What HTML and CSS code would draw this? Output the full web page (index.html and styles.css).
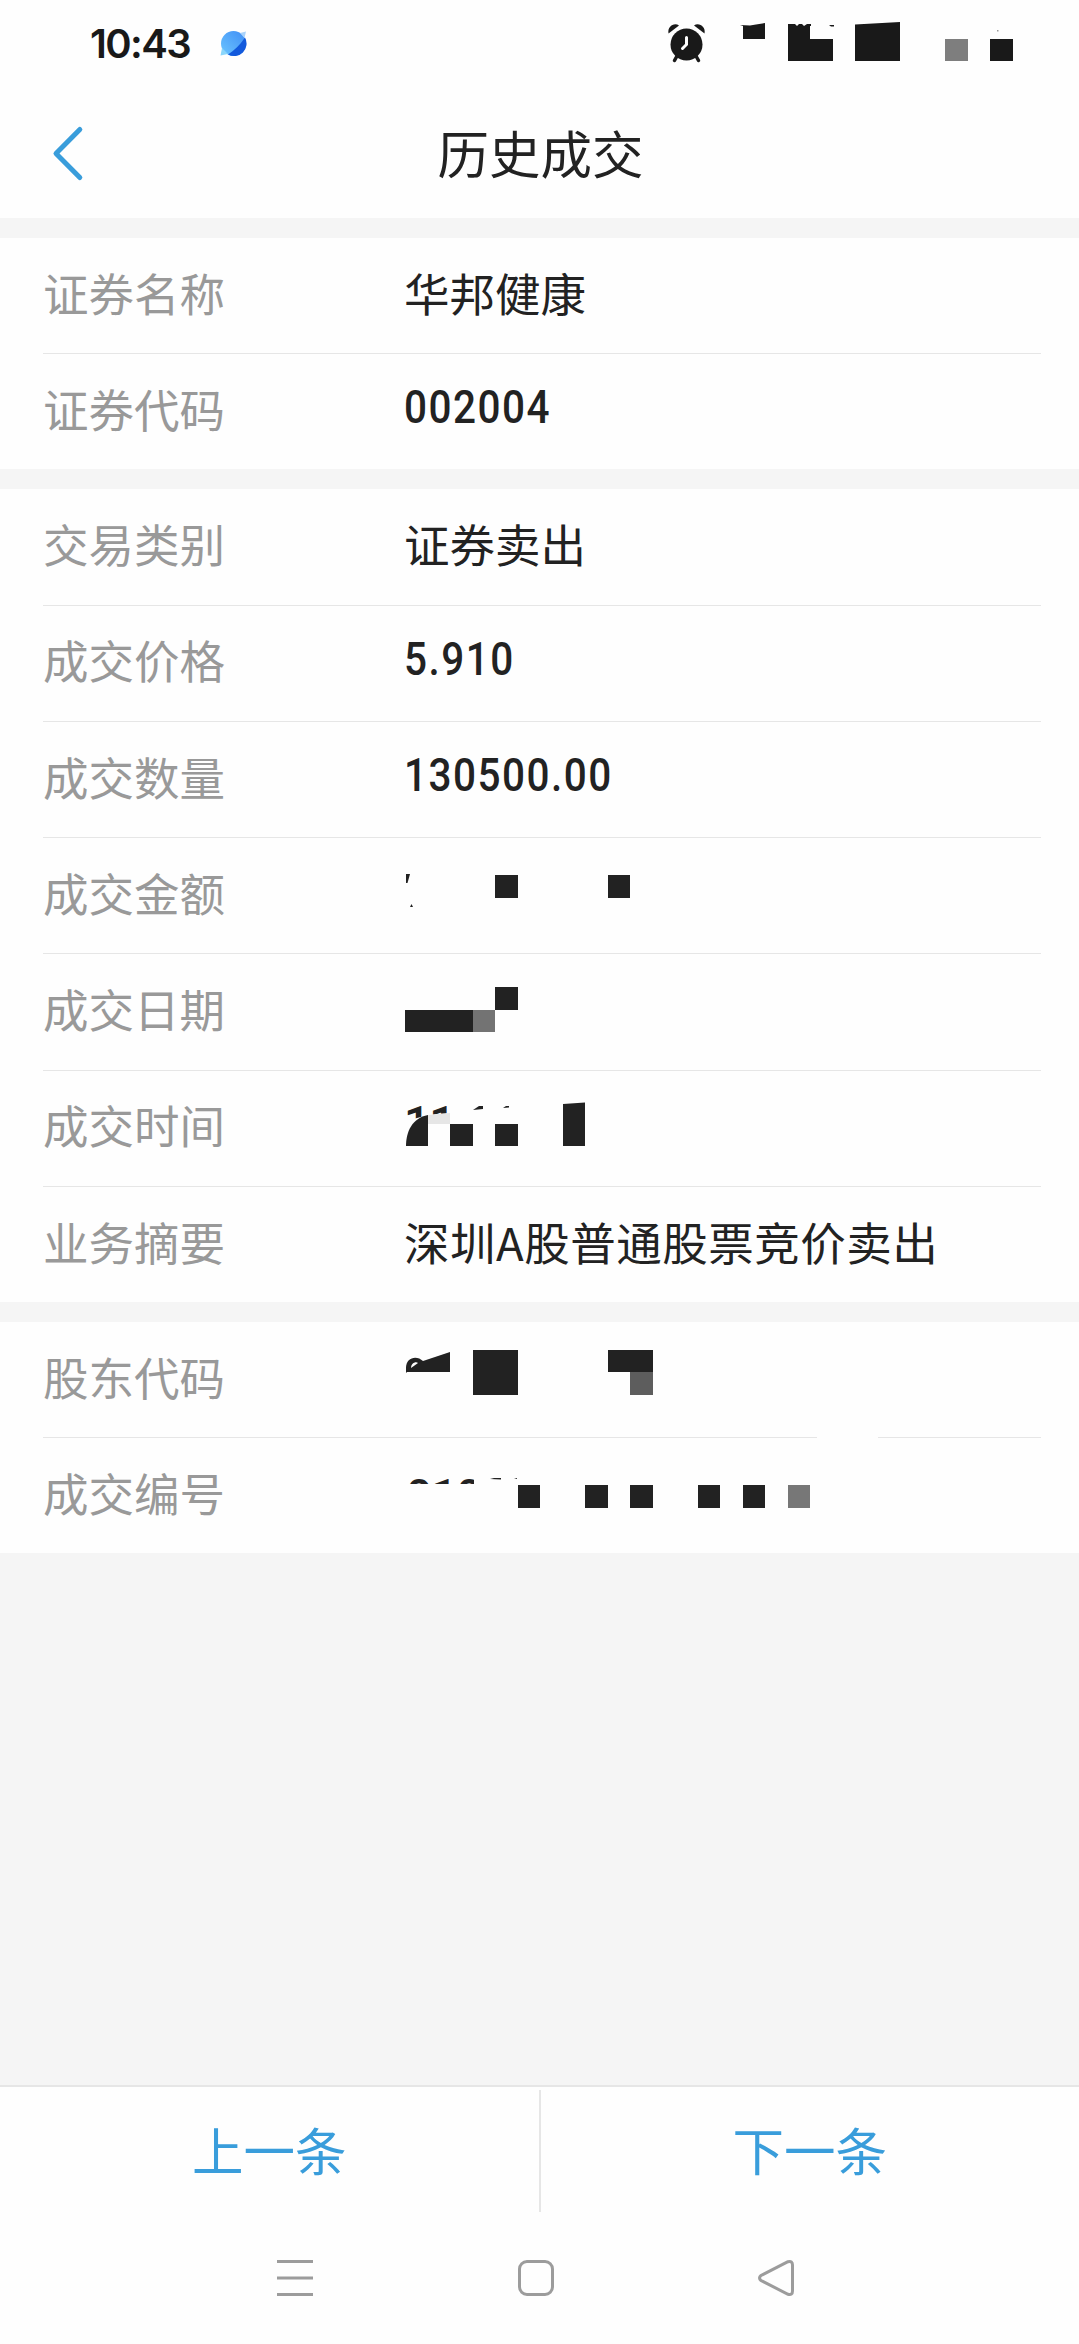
FILE: index.html
```
<!DOCTYPE html>
<html lang="zh-CN">
<head>
    <meta charset="UTF-8">
    <meta name="viewport" content="width=device-width, initial-scale=1.0">
    <title>历史成交</title>
    <link rel="stylesheet" href="styles.css">
</head>
<body>

    <div class="status-bar">
        <span class="time">10:43</span>
        <svg class="app-dot" width="32" height="32" viewBox="217 27 32 32">
            <defs>
                <linearGradient id="dotLight" x1="1" y1="0" x2="0" y2="1">
                    <stop offset="0" stop-color="#3f8df5"/>
                    <stop offset="1" stop-color="#6cc6ff"/>
                </linearGradient>
            </defs>
            <circle cx="233.5" cy="43.5" r="12.5" fill="url(#dotLight)"/>
            <path d="M245 37.500A12.500 12.500 0 0 1 228 54.500Q238 48 245 37.500Z" fill="#1259dc"/>
            <path d="M222 48L220.500 55.500L228 54Z" fill="#8ad6fb"/>
            <path d="M240 33L246 31.500L244.500 38Z" fill="#a9d3fb"/>
        </svg>
        <svg class="status-icons" width="360" height="50" viewBox="660 18 360 50">
            <g fill="#191919">
                <circle cx="686.500" cy="44.500" r="16"/>
                <path d="M668.500 33.500C667 27 674 22 679 25.500Z"/>
                <path d="M704.500 33.500C706 27 699 22 694 25.500Z"/>
                <path d="M677 56L674.500 60.500M696 56L698.500 60.500" stroke="#191919" stroke-width="3.500" stroke-linecap="round"/>
                <path d="M686.500 37.500V44.500L682.500 48.500" fill="none" stroke="#fff" stroke-width="3" stroke-linecap="round"/>
                <path d="M740 25L750 25.500L756 24.500L765 23V39H743V26Z"/>
                <path d="M788 24H795L797 26L799 24H802L804 26L807 24H811V26H810V39H833V61H788Z"/>
                <path d="M829 25H834V26.500H831Z"/>
                <path d="M855 24.500L900 22V61H855Z"/>
                <rect x="990" y="39" width="23" height="22"/>
            </g>
            <rect x="945" y="39" width="23" height="22" fill="#7e7e7e"/>
            <rect x="997" y="30" width="1.500" height="1.500" fill="#999"/>
        </svg>
    </div>

    <div class="header">
        <svg class="back" width="34" height="60" viewBox="50 122 34 60">
            <path d="M79.800 129.500L56 153.500L79.800 177.500" fill="none" stroke="#399ddb" stroke-width="5" stroke-linecap="round" stroke-linejoin="round"/>
        </svg>
        <h1>历史成交</h1>
    </div>

    <div class="section">
        <div class="row"><span class="label">证券名称</span><span class="value">华邦健康</span></div>
        <div class="row"><span class="label">证券代码</span><span class="value number">002004</span></div>
    </div>

    <div class="section">
        <div class="row"><span class="label">交易类别</span><span class="value">证券卖出</span></div>
        <div class="row"><span class="label">成交价格</span><span class="value number">5.910</span></div>
        <div class="row"><span class="label">成交数量</span><span class="value number">130500.00</span></div>
        <div class="row">
            <span class="label">成交金额</span>
            <svg class="mask" width="460" height="115" viewBox="404 838 460 115">
                <path d="M406 874H410L407.500 883H406Z"/>
                <path d="M410 907L411.500 904L413 907Z"/>
                <rect x="495" y="875" width="23" height="23"/>
                <rect x="608" y="875" width="22" height="23"/>
            </svg>
        </div>
        <div class="row">
            <span class="label">成交日期</span>
            <svg class="mask" width="460" height="115" viewBox="404 955 460 115">
                <rect x="495" y="988" width="23" height="23"/>
                <rect x="405" y="1011" width="68" height="22"/>
                <rect x="473" y="1011" width="22" height="22" fill="#737373"/>
            </svg>
        </div>
        <div class="row">
            <span class="label">成交时间</span>
            <svg class="mask" width="460" height="115" viewBox="404 1071 460 115">
                <clipPath id="timeClip"><path d="M404 1100H450V1113L428 1115L406 1121Z"/></clipPath>
                <text x="404" y="1139" clip-path="url(#timeClip)">11</text>
                <path d="M428 1115V1146H406C406 1132 412 1118 428 1115Z"/>
                <path d="M428 1115L450 1113V1124H428Z" fill="#e6e6e6"/>
                <path d="M473 1110L479 1106H483V1109Z"/>
                <path d="M503 1108L506 1106H509V1107.500Z"/>
                <rect x="450" y="1124" width="23" height="22"/>
                <rect x="495" y="1124" width="23" height="22"/>
                <path d="M563 1104L585 1102.500V1146H563Z"/>
            </svg>
        </div>
        <div class="row"><span class="label">业务摘要</span><span class="value long">深圳A股普通股票竞价卖出</span></div>
    </div>

    <div class="section">
        <div class="row broken-line">
            <span class="label">股东代码</span>
            <svg class="mask" width="460" height="115" viewBox="404 1322 460 115">
                <path d="M406 1373V1368C406 1357 417 1355 423 1361L450 1352V1372H407Z"/>
                <path d="M411 1368C411 1363 416 1361 418 1363Z" fill="#fff"/>
                <rect x="473" y="1350" width="45" height="45"/>
                <rect x="608" y="1350" width="45" height="22"/>
                <rect x="630" y="1372" width="23" height="23" fill="#5d5d5d"/>
            </svg>
        </div>
        <div class="row">
            <span class="label">成交编号</span>
            <svg class="mask" width="460" height="115" viewBox="404 1438 460 115">
                <clipPath id="codeClip"><rect x="404" y="1474" width="70" height="10"/></clipPath>
                <text x="406" y="1512" clip-path="url(#codeClip)">010</text>
                <path d="M490 1479L494 1478H501V1479.500Z"/>
                <path d="M514 1479L517 1478V1479Z"/>
                <rect x="518" y="1485" width="22" height="23"/>
                <rect x="585" y="1485" width="23" height="23"/>
                <rect x="630" y="1485" width="23" height="23"/>
                <rect x="698" y="1485" width="22" height="23"/>
                <rect x="743" y="1485" width="22" height="23"/>
                <rect x="788" y="1485" width="22" height="23" fill="#777"/>
            </svg>
        </div>
    </div>

    <div class="pager">
        <a class="pager-link">上一条</a>
        <a class="pager-link">下一条</a>
    </div>

    <div class="nav-bar">
        <svg width="40" height="40" viewBox="0 0 40 40">
            <path d="M2 3.500H38M2 20H38M2 36.500H38"/>
        </svg>
        <svg width="40" height="40" viewBox="0 0 40 40">
            <rect x="3.500" y="3.500" width="33" height="33" rx="7.500"/>
        </svg>
        <svg width="40" height="40" viewBox="0 0 40 40">
            <path d="M32 3.700L5 17.500Q2 20 5 22.500L32 36.300Q36.500 37.500 36.500 33V7Q36.500 2.500 32 3.700Z"/>
        </svg>
    </div>

</body>
</html>
```
FILE: styles.css
```
* {
    box-sizing: border-box;
}
body {
    margin: 0;
    width: 1079px;
    height: 2344px;
    display: flex;
    flex-direction: column;
    overflow: hidden;
    font-family: "Noto Sans CJK SC", sans-serif;
    background: #f5f5f5;
    color: #222;
}
svg {
    display: block;
    flex: none;
}
.status-bar {
    height: 86px;
    padding: 0 59px 0 90px;
    display: flex;
    align-items: center;
    background: #fefefe;
}
.time {
    width: 127px;
    font-family: Inter, sans-serif;
    font-size: 40px;
    font-weight: 600;
    letter-spacing: -1.6px;
    color: #191919;
}
.status-icons {
    margin-left: auto;
}
.header {
    height: 132px;
    padding: 0 48px 0 50px;
    display: grid;
    grid-template-columns: 34px 1fr 34px;
    align-items: center;
    background: #fefefe;
}
.header h1 {
    margin: 0;
    font-size: 51.5px;
    font-weight: 400;
    line-height: 76px;
    text-align: center;
}
.section {
    margin-top: 20px;
    padding: 0 38px 0 43px;
    background: #fefefe;
}
.row {
    height: 116.3px;
    display: flex;
    align-items: center;
    border-bottom: 1px solid #e6e6e6;
}
.row:last-child {
    height: 115px;
    border-bottom: none;
}
.broken-line {
    border-bottom: none;
    background: linear-gradient(to right, #e6e6e6 774px, transparent 774px 835px, #e6e6e6 835px) left bottom / 100% 1px no-repeat;
}
.label {
    width: 361px;
    padding-bottom: 8px;
    font-size: 45.5px;
    color: #999;
}
.value {
    padding-bottom: 8px;
    font-size: 45.5px;
    white-space: nowrap;
}
.long {
    letter-spacing: 0.5px;
}
.number {
    padding-bottom: 9px;
    font-family: Roboto, sans-serif;
    font-size: 46px;
    font-weight: 500;
    letter-spacing: 1.7px;
    transform: scaleX(0.88);
    transform-origin: left;
}
.mask {
    align-self: flex-start;
    fill: #222;
}
.mask text {
    font-family: Roboto, sans-serif;
    font-size: 46px;
    font-weight: 500;
    letter-spacing: -1px;
}
.pager {
    height: 127px;
    margin-top: auto;
    padding-top: 3px;
    display: flex;
    border-top: 2px solid #e6e6e6;
    background: #fefefe;
}
.pager-link {
    flex: 1;
    text-align: center;
    font-size: 51.5px;
    line-height: 117px;
    color: #399ddb;
}
.pager-link + .pager-link {
    border-left: 2px solid #e6e6e6;
}
.nav-bar {
    height: 132px;
    padding: 46px 283px 0 275px;
    display: flex;
    justify-content: space-between;
    background: #fefefe;
}
.nav-bar svg {
    fill: none;
    stroke: #9c9c9c;
    stroke-width: 3;
}
```
